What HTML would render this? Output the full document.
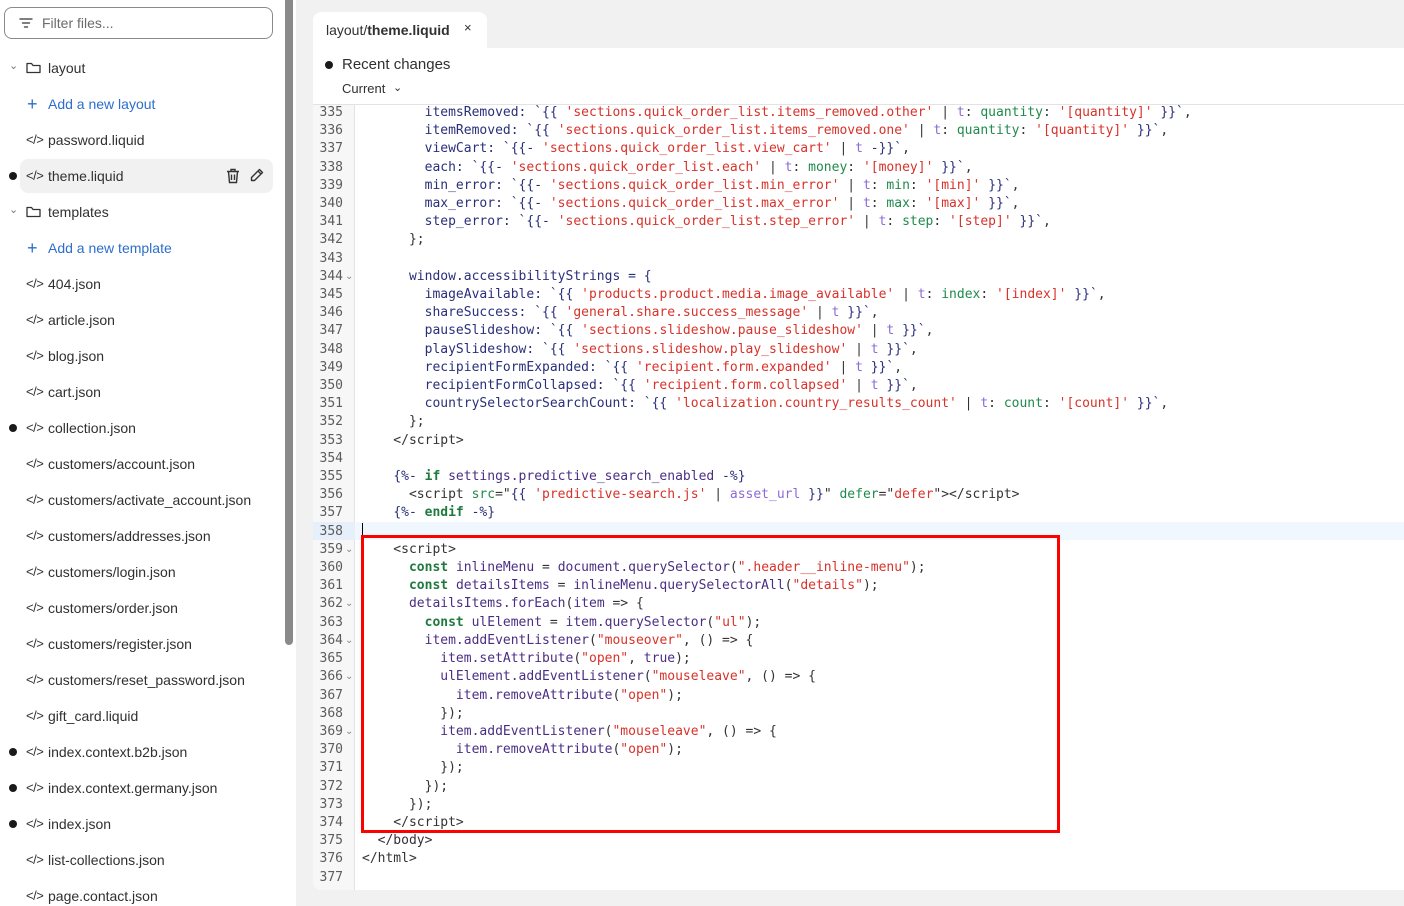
<!DOCTYPE html>
<html><head><meta charset="utf-8"><style>
*{margin:0;padding:0;box-sizing:border-box}
html,body{width:1404px;height:906px;overflow:hidden}
body{background:#f1f1f1;font-family:"Liberation Sans",sans-serif;position:relative;color:#303030}
#side{position:absolute;left:0;top:0;width:296px;height:906px;background:#fff}
#filter{position:absolute;left:4px;top:7px;width:269px;height:32px;border:1px solid #8a8a8a;border-radius:8px;font-size:14px;color:#6b6b6b;padding:7px 0 0 37px}
#filter svg{position:absolute;left:14px;top:9px}
.row{position:absolute;left:0;height:34px;font-size:14px;line-height:34px;color:#303030;white-space:nowrap}
.row .t{position:absolute;left:48px}
.row .ic{position:absolute;left:26px;top:0;font-size:13px;letter-spacing:-0.5px}
.dot{position:absolute;left:9px;top:13px;width:8px;height:8px;border-radius:50%;background:#1a1a1a}
.blue{color:#2c6ecb}
#sb{position:absolute;left:285px;top:0;width:8px;height:645px;background:#8a8a8a;border-radius:0 0 4px 4px}
#card{position:absolute;left:313px;top:48px;width:1091px;height:842px;background:#fff;border-radius:0 0 0 8px}
#tab{position:absolute;left:313px;top:12px;width:174px;height:37px;background:#fff;border-radius:8px 8px 0 0;font-size:14px;padding:10px 0 0 13px}
#gut{position:absolute;left:313px;top:105px;width:42px;height:785px;background:#f7f7f7;border-right:1px solid #e3e3e3;border-radius:0 0 0 8px}
#hl{position:absolute;left:355px;top:522px;width:1049px;height:18px;background:#f1f7fe}
#hlg{position:absolute;left:313px;top:522px;width:42px;height:18px;background:#e6f0fb}
pre{position:absolute;top:104px;font-family:"DejaVu Sans Mono",monospace;font-size:13px;line-height:18.2px;color:#2b2b2b}
#nums{left:313px;width:30px;text-align:right;color:#5c5c5c}
.fd{position:absolute;left:345px;color:#888;font-size:10px;line-height:18px}
#code{left:362px;color:#333}
.p{color:#2a2f7a}.s{color:#d8322a}.f{color:#8c6bd6}.g{color:#1f8a4c}.k{color:#1f7a3e;font-weight:bold}.v{color:#4b2e83}
#box{position:absolute;left:361px;top:535px;width:699px;height:298px;border:3px solid #f00}
</style></head><body>
<div id="side">
<div id="filter"><svg width="14" height="12" viewBox="0 0 14 12"><path d="M1 2h12M3.5 6h7M5.5 10h3" stroke="#555" stroke-width="1.4" stroke-linecap="round"/></svg>Filter files...</div>
<div class="row" style="top:51px;width:290px"><span style="position:absolute;left:9px;top:-2px;color:#777;font-size:11px">&#8964;</span><svg style="position:absolute;left:26px;top:11px" width="15" height="12" viewBox="0 0 15 12"><path d="M1 2.5v8h13v-7H7L5.5 1.5H1z" fill="none" stroke="#333" stroke-width="1.3" stroke-linejoin="round"/></svg><span class="t">layout</span></div>
<div class="row blue" style="top:87px"><span style="position:absolute;left:27px;font-size:18px">+</span><span class="t">Add a new layout</span></div>
<div class="row" style="top:123px"><span class="ic">&lt;/&gt;</span><span class="t">password.liquid</span></div>
<div style="position:absolute;left:20px;top:159px;width:253px;height:34px;background:#f1f1f1;border-radius:8px"></div>
<div class="row" style="top:159px;width:280px"><span class="dot"></span><span class="ic">&lt;/&gt;</span><span class="t">theme.liquid</span>
<svg style="position:absolute;left:226px;top:9px" width="14" height="16" viewBox="0 0 14 16"><path d="M1 3.5h12M5 3.5V1.5h4v2M2.5 3.5l1 11h7l1-11M5.5 6.5v5.5M8.5 6.5v5.5" fill="none" stroke="#333" stroke-width="1.4"/></svg>
<svg style="position:absolute;left:250px;top:9px" width="14" height="15" viewBox="0 0 14 15"><path d="M9.5 1.5l3 3-8 8H1.5v-3z M8 3l3 3" fill="none" stroke="#333" stroke-width="1.4" stroke-linejoin="round"/></svg></div>
<div class="row" style="top:195px;width:290px"><span style="position:absolute;left:9px;top:-2px;color:#777;font-size:11px">&#8964;</span><svg style="position:absolute;left:26px;top:11px" width="15" height="12" viewBox="0 0 15 12"><path d="M1 2.5v8h13v-7H7L5.5 1.5H1z" fill="none" stroke="#333" stroke-width="1.3" stroke-linejoin="round"/></svg><span class="t">templates</span></div>
<div class="row blue" style="top:231px"><span style="position:absolute;left:27px;font-size:18px">+</span><span class="t">Add a new template</span></div>
<div class="row" style="top:267px"><span class="ic">&lt;/&gt;</span><span class="t">404.json</span></div>
<div class="row" style="top:303px"><span class="ic">&lt;/&gt;</span><span class="t">article.json</span></div>
<div class="row" style="top:339px"><span class="ic">&lt;/&gt;</span><span class="t">blog.json</span></div>
<div class="row" style="top:375px"><span class="ic">&lt;/&gt;</span><span class="t">cart.json</span></div>
<div class="row" style="top:411px"><span class="dot"></span><span class="ic">&lt;/&gt;</span><span class="t">collection.json</span></div>
<div class="row" style="top:447px"><span class="ic">&lt;/&gt;</span><span class="t">customers/account.json</span></div>
<div class="row" style="top:483px"><span class="ic">&lt;/&gt;</span><span class="t">customers/activate_account.json</span></div>
<div class="row" style="top:519px"><span class="ic">&lt;/&gt;</span><span class="t">customers/addresses.json</span></div>
<div class="row" style="top:555px"><span class="ic">&lt;/&gt;</span><span class="t">customers/login.json</span></div>
<div class="row" style="top:591px"><span class="ic">&lt;/&gt;</span><span class="t">customers/order.json</span></div>
<div class="row" style="top:627px"><span class="ic">&lt;/&gt;</span><span class="t">customers/register.json</span></div>
<div class="row" style="top:663px"><span class="ic">&lt;/&gt;</span><span class="t">customers/reset_password.json</span></div>
<div class="row" style="top:699px"><span class="ic">&lt;/&gt;</span><span class="t">gift_card.liquid</span></div>
<div class="row" style="top:735px"><span class="dot"></span><span class="ic">&lt;/&gt;</span><span class="t">index.context.b2b.json</span></div>
<div class="row" style="top:771px"><span class="dot"></span><span class="ic">&lt;/&gt;</span><span class="t">index.context.germany.json</span></div>
<div class="row" style="top:807px"><span class="dot"></span><span class="ic">&lt;/&gt;</span><span class="t">index.json</span></div>
<div class="row" style="top:843px"><span class="ic">&lt;/&gt;</span><span class="t">list-collections.json</span></div>
<div class="row" style="top:879px"><span class="ic">&lt;/&gt;</span><span class="t">page.contact.json</span></div>
<div id="sb"></div>
</div>
<div id="card"></div>
<div id="tab">layout/<b style="font-weight:600">theme.liquid</b><span style="position:absolute;left:151px;top:8px;font-size:13px">×</span></div>
<div style="position:absolute;left:325px;top:61px;width:8px;height:8px;border-radius:50%;background:#1a1a1a"></div>
<div style="position:absolute;left:342px;top:56px;font-size:15px;color:#303030">Recent changes</div>
<div style="position:absolute;left:342px;top:81px;font-size:13px;color:#303030">Current <span style="font-size:11px;margin-left:4px;position:relative;top:-2px">&#8964;</span></div>
<div style="position:absolute;left:313px;top:104px;width:1091px;height:1px;background:#e3e3e3"></div>
<div id="gut"></div>
<div id="hl"></div><div id="hlg"></div>
<div style="position:absolute;left:362px;top:523px;width:1px;height:16px;background:#000"></div>
<pre id="nums">335
336
337
338
339
340
341
342
343
344
345
346
347
348
349
350
351
352
353
354
355
356
357
358
359
360
361
362
363
364
365
366
367
368
369
370
371
372
373
374
375
376
377</pre>
<div class="fd" style="top:268px">⌄</div>
<div class="fd" style="top:541px">⌄</div>
<div class="fd" style="top:595px">⌄</div>
<div class="fd" style="top:632px">⌄</div>
<div class="fd" style="top:668px">⌄</div>
<div class="fd" style="top:723px">⌄</div>
<pre id="code">        <span class="p">itemsRemoved: `{{</span> <span class="s">'sections.quick_order_list.items_removed.other'</span> | <span class="f">t</span>: <span class="g">quantity</span>: <span class="s">'[quantity]'</span> <span class="p">}}`</span>,
        <span class="p">itemRemoved: `{{</span> <span class="s">'sections.quick_order_list.items_removed.one'</span> | <span class="f">t</span>: <span class="g">quantity</span>: <span class="s">'[quantity]'</span> <span class="p">}}`</span>,
        <span class="p">viewCart: `{{-</span> <span class="s">'sections.quick_order_list.view_cart'</span> | <span class="f">t</span> <span class="p">-}}`</span>,
        <span class="p">each: `{{-</span> <span class="s">'sections.quick_order_list.each'</span> | <span class="f">t</span>: <span class="g">money</span>: <span class="s">'[money]'</span> <span class="p">}}`</span>,
        <span class="p">min_error: `{{-</span> <span class="s">'sections.quick_order_list.min_error'</span> | <span class="f">t</span>: <span class="g">min</span>: <span class="s">'[min]'</span> <span class="p">}}`</span>,
        <span class="p">max_error: `{{-</span> <span class="s">'sections.quick_order_list.max_error'</span> | <span class="f">t</span>: <span class="g">max</span>: <span class="s">'[max]'</span> <span class="p">}}`</span>,
        <span class="p">step_error: `{{-</span> <span class="s">'sections.quick_order_list.step_error'</span> | <span class="f">t</span>: <span class="g">step</span>: <span class="s">'[step]'</span> <span class="p">}}`</span>,
      };

      <span class="p">window.accessibilityStrings = {</span>
        <span class="p">imageAvailable: `{{</span> <span class="s">'products.product.media.image_available'</span> | <span class="f">t</span>: <span class="g">index</span>: <span class="s">'[index]'</span> <span class="p">}}`</span>,
        <span class="p">shareSuccess: `{{</span> <span class="s">'general.share.success_message'</span> | <span class="f">t</span> <span class="p">}}`</span>,
        <span class="p">pauseSlideshow: `{{</span> <span class="s">'sections.slideshow.pause_slideshow'</span> | <span class="f">t</span> <span class="p">}}`</span>,
        <span class="p">playSlideshow: `{{</span> <span class="s">'sections.slideshow.play_slideshow'</span> | <span class="f">t</span> <span class="p">}}`</span>,
        <span class="p">recipientFormExpanded: `{{</span> <span class="s">'recipient.form.expanded'</span> | <span class="f">t</span> <span class="p">}}`</span>,
        <span class="p">recipientFormCollapsed: `{{</span> <span class="s">'recipient.form.collapsed'</span> | <span class="f">t</span> <span class="p">}}`</span>,
        <span class="p">countrySelectorSearchCount: `{{</span> <span class="s">'localization.country_results_count'</span> | <span class="f">t</span>: <span class="g">count</span>: <span class="s">'[count]'</span> <span class="p">}}`</span>,
      };
    &lt;/script&gt;

    <span class="p">{%-</span> <span class="k">if</span> <span class="v">settings.predictive_search_enabled</span> <span class="p">-%}</span>
      &lt;script <span class="g">src</span>="<span class="p">{{</span> <span class="s">'predictive-search.js'</span> | <span class="f">asset_url</span> <span class="p">}}</span>" <span class="g">defer</span>="<span class="s">defer</span>"&gt;&lt;/script&gt;
    <span class="p">{%-</span> <span class="k">endif</span> <span class="p">-%}</span>

    &lt;script&gt;
      <span class="k">const</span> <span class="v">inlineMenu</span> = <span class="v">document.querySelector</span>(<span class="s">".header__inline-menu"</span>);
      <span class="k">const</span> <span class="v">detailsItems</span> = <span class="v">inlineMenu.querySelectorAll</span>(<span class="s">"details"</span>);
      <span class="v">detailsItems.forEach</span>(<span class="v">item</span> =&gt; {
        <span class="k">const</span> <span class="v">ulElement</span> = <span class="v">item.querySelector</span>(<span class="s">"ul"</span>);
        <span class="v">item.addEventListener</span>(<span class="s">"mouseover"</span>, () =&gt; {
          <span class="v">item.setAttribute</span>(<span class="s">"open"</span>, <span class="v">true</span>);
          <span class="v">ulElement.addEventListener</span>(<span class="s">"mouseleave"</span>, () =&gt; {
            <span class="v">item.removeAttribute</span>(<span class="s">"open"</span>);
          });
          <span class="v">item.addEventListener</span>(<span class="s">"mouseleave"</span>, () =&gt; {
            <span class="v">item.removeAttribute</span>(<span class="s">"open"</span>);
          });
        });
      });
    &lt;/script&gt;
  &lt;/body&gt;
&lt;/html&gt;
</pre>
<div id="box"></div>
</body></html>
